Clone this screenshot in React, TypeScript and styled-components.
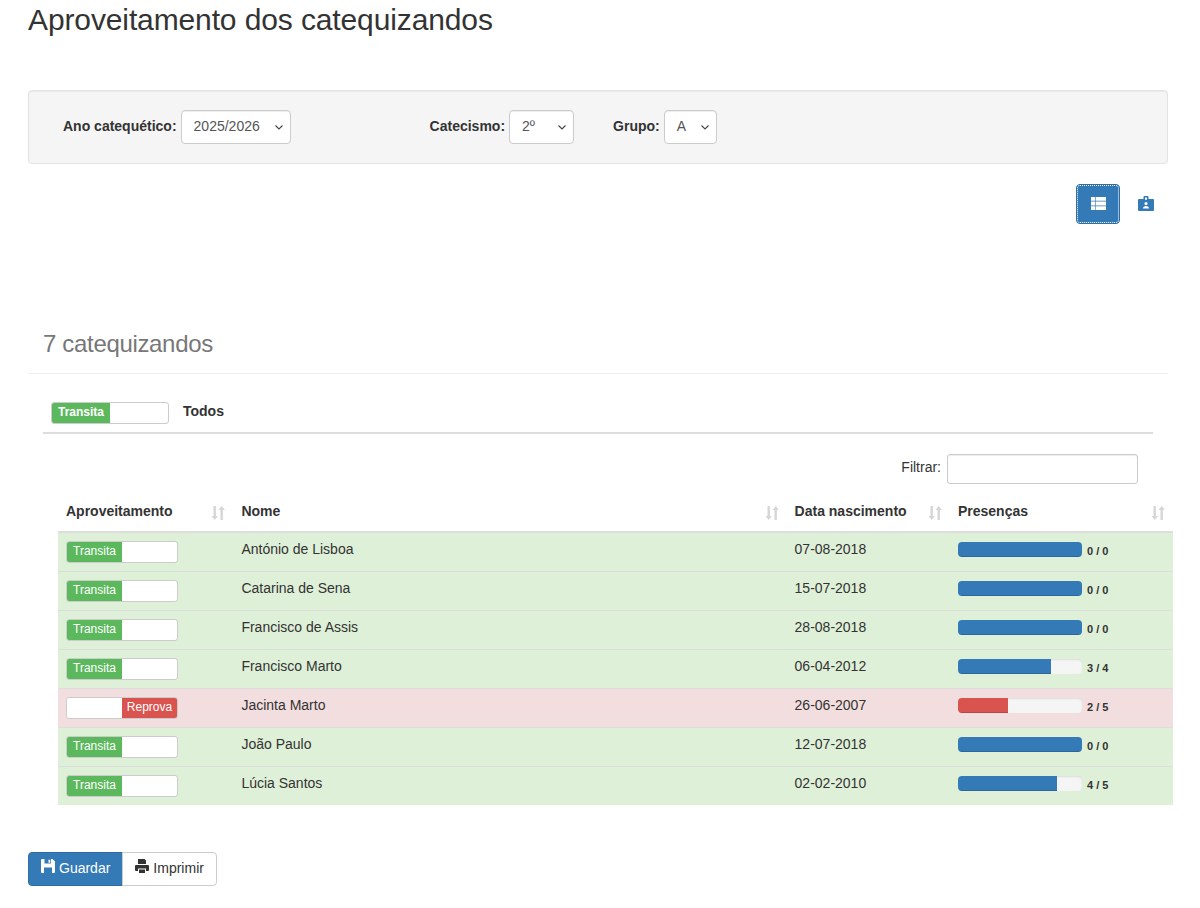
import React from "react";
import styled, { createGlobalStyle } from "styled-components";

const Global = createGlobalStyle`
    * {
        box-sizing: border-box;
    }
    body {
        margin: 0;
        background: #fff;
        color: #333;
        font-family: "Helvetica Neue", Helvetica, "Liberation Sans", Arial, sans-serif;
        font-size: 14px;
        line-height: 20px;
    }
`;

const Page = styled.div`
    padding: 3px 32px 22px 28px;
    height: 908px;
    overflow: hidden;
`;

const Title = styled.h1`
    margin: 0 0 54px;
    font-size: 30px;
    font-weight: 400;
    line-height: 33px;
    letter-spacing: -0.12px;
`;

const FilterWell = styled.div`
    display: flex;
    align-items: center;
    height: 74px;
    padding: 0 0 2px 34px;
    background: #f5f5f5;
    border: 1px solid #e3e3e3;
    border-radius: 4px;
    box-shadow: inset 0 1px 1px rgba(0, 0, 0, 0.05);
`;

const FilterLabel = styled.label<{ $gap?: number }>`
    display: flex;
    align-items: center;
    gap: 4px;
    margin-left: ${(p) => p.$gap || 0}px;
    font-weight: 700;
    line-height: 18px;
`;

const FakeSelect = styled.div<{ $width: number }>`
    display: flex;
    align-items: center;
    justify-content: space-between;
    width: ${(p) => p.$width}px;
    height: 34px;
    margin-top: 2px;
    padding: 0 6px 2px 12px;
    background: #fff;
    border: 1px solid #ccc;
    border-radius: 4px;
    box-shadow: inset 0 1px 1px rgba(0, 0, 0, 0.075);
    color: #555;
    font-weight: 400;
    svg {
        position: relative;
        top: 1px;
        left: -1px;
    }
`;

const ViewBar = styled.div`
    display: flex;
    justify-content: flex-end;
    gap: 4px;
    margin-top: 20px;
`;

const ViewButton = styled.div<{ $active?: boolean }>`
    display: flex;
    align-items: center;
    justify-content: center;
    width: 44px;
    height: 40px;
    padding-bottom: 2px;
    border-radius: 4px;
    color: ${(p) => (p.$active ? "#fff" : "#337ab7")};
    background: ${(p) => (p.$active ? "#337ab7" : "transparent")};
    border: 1px solid ${(p) => (p.$active ? "#2e6da4" : "transparent")};
    outline: ${(p) => (p.$active ? "1px dotted #fff" : "0")};
    outline-offset: -2px;
`;

const Section = styled.div`
    margin-top: 103px;
`;

const SectionHeader = styled.div`
    padding: 0 15px 12px;
    border-bottom: 1px solid #eee;
`;

const SectionTitle = styled.h2`
    margin: 0;
    color: #777;
    font-size: 24px;
    font-weight: 400;
    line-height: 34px;
    letter-spacing: -0.33px;
`;

const Body = styled.div`
    padding: 0 15px;
`;

const AllRow = styled.div`
    display: flex;
    align-items: center;
    gap: 14px;
    height: 60px;
    padding: 28px 0 8px 8px;
    border-bottom: 2px solid #ddd;
`;

const AllLabel = styled.span`
    font-weight: 700;
    position: relative;
    top: -2px;
`;

const Toggle = styled.div<{ $width: number; $off?: boolean }>`
    display: flex;
    justify-content: ${(p) => (p.$off ? "flex-end" : "flex-start")};
    width: ${(p) => p.$width}px;
    height: 22px;
    background: #fff;
    border: 1px solid #ccc;
    border-radius: 3px;
    overflow: hidden;
`;

const ToggleOn = styled.span<{ $off?: boolean; $bold?: boolean }>`
    width: 50%;
    background: ${(p) => (p.$off ? "#d9534f" : "#5cb85c")};
    color: #fff;
    font-size: 12px;
    font-weight: ${(p) => (p.$bold ? 700 : 400)};
    line-height: 19px;
    text-align: center;
`;

const FilterLine = styled.div`
    display: flex;
    justify-content: flex-end;
    align-items: center;
    gap: 6px;
    margin-top: 20px;
    padding-right: 15px;
`;

const FilterText = styled.span`
    padding-bottom: 4px;
`;

const FilterInput = styled.input`
    width: 191px;
    height: 30px;
    padding: 5px 10px;
    border: 1px solid #ccc;
    border-radius: 3px;
    background: #fff;
    box-shadow: inset 0 1px 1px rgba(0, 0, 0, 0.075);
`;

const Table = styled.table`
    width: 1115px;
    margin: 6px 0 0 15px;
    border-collapse: collapse;
    table-layout: fixed;
`;

const Th = styled.th<{ $width: number }>`
    position: relative;
    width: ${(p) => p.$width}px;
    height: 42px;
    padding: 11px 8px 8px;
    border-bottom: 2px solid #ddd;
    text-align: left;
    font-weight: 700;
    vertical-align: top;
`;

const SortIcon = styled.svg`
    position: absolute;
    top: 15px;
    right: 8px;
    width: 14px;
    height: 16px;
`;

const Row = styled.tr<{ $fail?: boolean }>`
    background: ${(p) => (p.$fail ? "#f2dede" : "#dff0d8")};
    &:last-child td {
        height: 38px;
    }
`;

const Td = styled.td<{ $text?: boolean }>`
    height: 39px;
    padding: ${(p) => (p.$text ? "6px 8px" : "8px")};
    border-top: 1px solid #ddd;
    vertical-align: top;
`;

const ProgressWrap = styled.div`
    display: flex;
    align-items: center;
    gap: 5px;
    height: 22px;
    margin-top: -3px;
    margin-bottom: -3px;
`;

const Track = styled.div`
    width: 124px;
    height: 15px;
    background: #f5f5f5;
    border-radius: 4px;
    overflow: hidden;
    box-shadow: inset 0 1px 2px rgba(0, 0, 0, 0.1);
`;

const Fill = styled.div<{ $fail?: boolean }>`
    height: 100%;
    background: ${(p) => (p.$fail ? "#d9534f" : "#337ab7")};
    box-shadow: inset 0 -1px 0 rgba(0, 0, 0, 0.15);
`;

const Count = styled.span`
    font-size: 11px;
    font-weight: 700;
    position: relative;
    top: 2px;
`;

const Actions = styled.div`
    display: flex;
    margin-top: 47px;
`;

const ActionButton = styled.button<{ $primary?: boolean }>`
    display: flex;
    align-items: center;
    gap: 4px;
    height: 34px;
    padding: 0 12px 2px;
    font: inherit;
    color: ${(p) => (p.$primary ? "#fff" : "#333")};
    background: ${(p) => (p.$primary ? "#337ab7" : "#fff")};
    border: 1px solid ${(p) => (p.$primary ? "#2e6da4" : "#ccc")};
    border-radius: ${(p) => (p.$primary ? "4px 0 0 4px" : "0 4px 4px 0")};
    margin-left: ${(p) => (p.$primary ? 0 : -1)}px;
    svg {
        position: relative;
        top: -2px;
    }
`;

const Chevron = () => (
    <svg width="8" height="5" viewBox="0 0 8 5" fill="none" stroke="#444" strokeWidth="1.1">
        <path d="M0.5 0.5l3.5 3.5 3.5-3.5" />
    </svg>
);

const Sort = () => (
    <SortIcon viewBox="0 0 14 16" fill="#d6d6d6">
        <path d="M2.5 1h2.4v10h2l-3.2 4-3.2-4h2z" />
        <path d="M9.5 15h2.4V5h2l-3.2-4-3.2 4h2z" />
    </SortIcon>
);

const ListIcon = () => (
    <svg width="15" height="13" viewBox="0 0 15 13" fill="currentColor">
        <path d="M0 0h4.4v3.8H0zM5 0h10v3.8H5zM0 4.6h4.4v3.8H0zM5 4.6h10v3.8H5zM0 9.2h4.4V13H0zM5 9.2h10V13H5z" />
    </svg>
);

const BadgeIcon = () => (
    <svg width="16" height="15" viewBox="0 0 16 15" fill="currentColor">
        <path
            fillRule="evenodd"
            d="M1 3h4.5V1a1 1 0 0 1 1-1h3a1 1 0 0 1 1 1v2H15a1 1 0 0 1 1 1v10a1 1 0 0 1-1 1H1a1 1 0 0 1-1-1V4a1 1 0 0 1 1-1zM7 1.5v2.2h2V1.5zM8 6a1.6 1.6 0 1 0 0 3.2A1.6 1.6 0 0 0 8 6zM5 12.6h6c0-1.6-1.2-2.6-3-2.6s-3 1-3 2.6z"
        />
    </svg>
);

const SaveIcon = () => (
    <svg width="14" height="14" viewBox="0 0 14 14" fill="currentColor">
        <path
            fillRule="evenodd"
            d="M0 1a1 1 0 0 1 1-1h10.5L14 2.5V13a1 1 0 0 1-1 1H1a1 1 0 0 1-1-1zM3.5 0v4.5h6.5V0zM7.5 .8v3h1.8v-3zM3 8.5V14h8V8.5z"
        />
    </svg>
);

const PrintIcon = () => (
    <svg width="14" height="14" viewBox="0 0 14 14" fill="currentColor">
        <path
            fillRule="evenodd"
            d="M3 0h6.5L11 1.5V5H3zM1 6h12a1 1 0 0 1 1 1v4a1 1 0 0 1-1 1h-2V9.5H3V12H1a1 1 0 0 1-1-1V7a1 1 0 0 1 1-1zM4 10.5h6V14H4z"
        />
    </svg>
);

type Student = { name: string; birth: string; done: number; total: number };

const students: Student[] = [
    { name: "António de Lisboa", birth: "07-08-2018", done: 0, total: 0 },
    { name: "Catarina de Sena", birth: "15-07-2018", done: 0, total: 0 },
    { name: "Francisco de Assis", birth: "28-08-2018", done: 0, total: 0 },
    { name: "Francisco Marto", birth: "06-04-2012", done: 3, total: 4 },
    { name: "Jacinta Marto", birth: "26-06-2007", done: 2, total: 5 },
    { name: "João Paulo", birth: "12-07-2018", done: 0, total: 0 },
    { name: "Lúcia Santos", birth: "02-02-2010", done: 4, total: 5 },
];

const App = () => {
    return (
        <Page>
            <Global />
            <Title>Aproveitamento dos catequizandos</Title>

            <FilterWell>
                <FilterLabel>
                    Ano catequético:
                    <FakeSelect $width={110}>
                        2025/2026 <Chevron />
                    </FakeSelect>
                </FilterLabel>
                <FilterLabel $gap={139}>
                    Catecismo:
                    <FakeSelect $width={65}>
                        2º <Chevron />
                    </FakeSelect>
                </FilterLabel>
                <FilterLabel $gap={39}>
                    Grupo:
                    <FakeSelect $width={53}>
                        A <Chevron />
                    </FakeSelect>
                </FilterLabel>
            </FilterWell>

            <ViewBar>
                <ViewButton $active>
                    <ListIcon />
                </ViewButton>
                <ViewButton>
                    <BadgeIcon />
                </ViewButton>
            </ViewBar>

            <Section>
                <SectionHeader>
                    <SectionTitle>7 catequizandos</SectionTitle>
                </SectionHeader>
                <Body>
                    <AllRow>
                        <Toggle $width={118}>
                            <ToggleOn $bold>Transita</ToggleOn>
                        </Toggle>
                        <AllLabel>Todos</AllLabel>
                    </AllRow>
                    <FilterLine>
                        <FilterText>Filtrar:</FilterText>
                        <FilterInput />
                    </FilterLine>
                    <Table>
                        <thead>
                            <tr>
                                <Th $width={175.4}>
                                    Aproveitamento
                                    <Sort />
                                </Th>
                                <Th $width={553.2}>
                                    Nome
                                    <Sort />
                                </Th>
                                <Th $width={163.4}>
                                    Data nascimento
                                    <Sort />
                                </Th>
                                <Th $width={223}>
                                    Presenças
                                    <Sort />
                                </Th>
                            </tr>
                        </thead>
                        <tbody>
                            {students.map((x) => {
                                const fail = x.name === "Jacinta Marto";
                                const pct = x.total === 0 ? 100 : (x.done / x.total) * 100;
                                return (
                                    <Row key={x.name} $fail={fail}>
                                        <Td>
                                            <Toggle $width={112} $off={fail}>
                                                <ToggleOn $off={fail}>{fail ? "Reprova" : "Transita"}</ToggleOn>
                                            </Toggle>
                                        </Td>
                                        <Td $text>{x.name}</Td>
                                        <Td $text>{x.birth}</Td>
                                        <Td>
                                            <ProgressWrap>
                                                <Track>
                                                    <Fill $fail={fail} style={{ width: pct + "%" }} />
                                                </Track>
                                                <Count>
                                                    {x.done} / {x.total}
                                                </Count>
                                            </ProgressWrap>
                                        </Td>
                                    </Row>
                                );
                            })}
                        </tbody>
                    </Table>
                </Body>
            </Section>

            <Actions>
                <ActionButton $primary>
                    <SaveIcon /> Guardar
                </ActionButton>
                <ActionButton>
                    <PrintIcon /> Imprimir
                </ActionButton>
            </Actions>
        </Page>
    );
};

export default App;
